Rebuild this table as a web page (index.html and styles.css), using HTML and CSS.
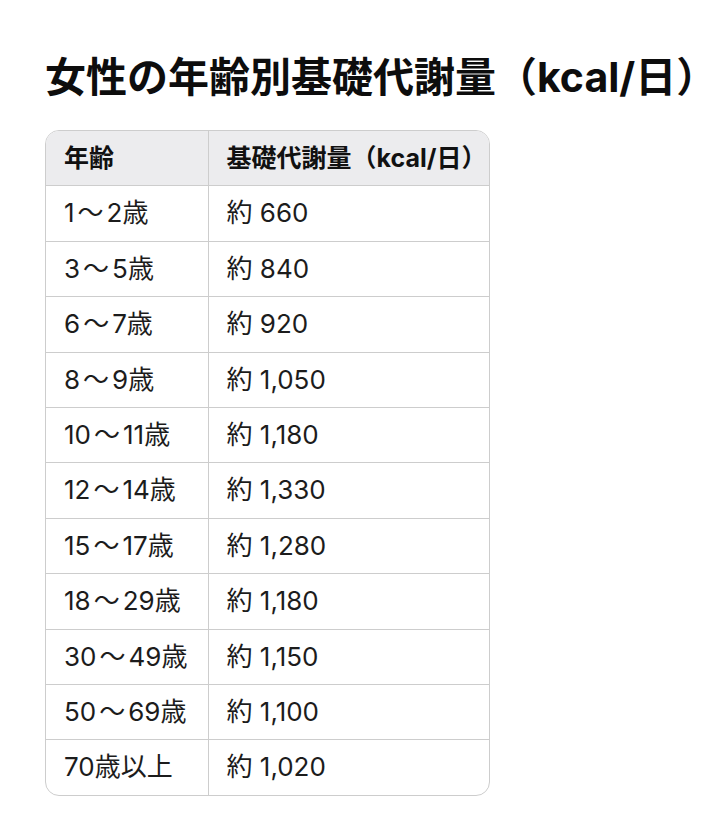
FILE: index.html
```html
<!DOCTYPE html>
<html lang="ja">
<head>
<meta charset="utf-8">
<title>女性の年齢別基礎代謝量</title>
<link rel="stylesheet" href="styles.css">
</head>
<body>
<main class="page">
  <h1 class="title">女性の年齢別基礎代謝量（kcal/日）</h1>
  <div class="table-wrap">
    <table class="bmr">
      <colgroup><col class="col-age"><col class="col-val"></colgroup>
      <thead>
        <tr><th>年齢</th><th>基礎代謝量（kcal/日）</th></tr>
      </thead>
      <tbody>
        <tr><td>1<span class="tilde">～</span>2歳</td><td>約 660</td></tr>
        <tr><td>3<span class="tilde">～</span>5歳</td><td>約 840</td></tr>
        <tr><td>6<span class="tilde">～</span>7歳</td><td>約 920</td></tr>
        <tr><td>8<span class="tilde">～</span>9歳</td><td>約 1,050</td></tr>
        <tr><td>10<span class="tilde">～</span>11歳</td><td>約 1,180</td></tr>
        <tr><td>12<span class="tilde">～</span>14歳</td><td>約 1,330</td></tr>
        <tr><td>15<span class="tilde">～</span>17歳</td><td>約 1,280</td></tr>
        <tr><td>18<span class="tilde">～</span>29歳</td><td>約 1,180</td></tr>
        <tr><td>30<span class="tilde">～</span>49歳</td><td>約 1,150</td></tr>
        <tr><td>50<span class="tilde">～</span>69歳</td><td>約 1,100</td></tr>
        <tr><td>70歳以上</td><td>約 1,020</td></tr>
      </tbody>
    </table>
  </div>
</main>
</body>
</html>
```
FILE: styles.css
```css
html, body {
  margin: 0;
  padding: 0;
  background: #ffffff;
}
body {
  font-family: "Inter", "Noto Sans CJK JP", sans-serif;
  color: #1c1c1c;
}
.page {
  padding: 53px 45px 0 45px;
}
.title {
  margin: 0;
  font-size: 41px;
  line-height: 48px;
  font-weight: 700;
  color: #0d0d0d;
  white-space: nowrap;
}
.table-wrap {
  box-sizing: border-box;
  margin-top: 29px;
  width: 445px;
  border: 1px solid #cdcdcd;
  border-radius: 14px;
  overflow: hidden;
}
.bmr {
  width: 100%;
  table-layout: fixed;
  border-collapse: collapse;
  font-size: 26px;
}
.col-age {
  width: 162px;
}
.bmr th, .bmr td {
  text-align: left;
  padding: 14px 18px;
  line-height: 26.4px;
  border-bottom: 1px solid #cdcdcd;
  white-space: nowrap;
}
.bmr th + th, .bmr td + td {
  border-left: 1px solid #cdcdcd;
}
.bmr tbody tr:last-child td {
  border-bottom: none;
}
.bmr th {
  background: #ececee;
  font-size: 25px;
  font-weight: 700;
  color: #111111;
}
.tilde {
  margin: 0 3px;
}
```
